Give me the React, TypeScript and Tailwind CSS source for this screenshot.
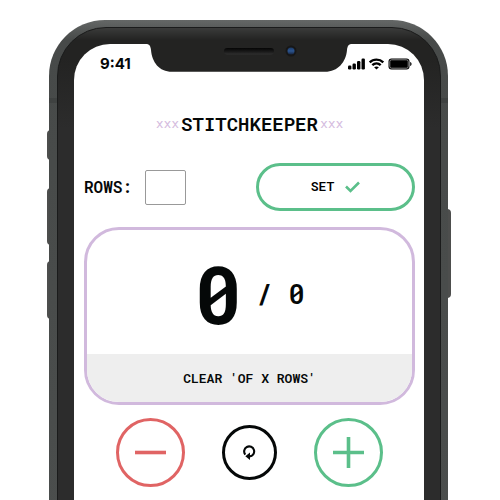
import React from "react";

const MONO = "font-['Roboto_Mono','DejaVu_Sans_Mono',monospace]";

function Notch() {
  return (
    <svg className="absolute left-1/2 -top-px -translate-x-1/2" width="206" height="29" viewBox="0 0 206 29" aria-hidden="true">
      <defs>
        <linearGradient id="speaker" x1="0" y1="0" x2="0" y2="1">
          <stop offset="0" stopColor="#050505" />
          <stop offset="0.6" stopColor="#1b1b1b" />
          <stop offset="1" stopColor="#303030" />
        </linearGradient>
        <linearGradient id="lens" x1="0" y1="0" x2="0" y2="1">
          <stop offset="0" stopColor="#1c3a66" />
          <stop offset="0.5" stopColor="#2c5590" />
          <stop offset="1" stopColor="#16243f" />
        </linearGradient>
      </defs>
      <path d="M0 0H206V1C202.500 1 201.500 3 201 7C200 19 192 28.800 179 28.800H26C13 28.800 6 19 5 7C4.500 3 3.500 1 0 1Z" fill="#232322" />
      <rect x="78" y="5" width="50" height="6.500" rx="3.200" fill="url(#speaker)" />
      <circle cx="145" cy="8" r="5.500" fill="#171717" />
      <circle cx="145" cy="8" r="3.500" fill="url(#lens)" />
    </svg>
  );
}

function StatusIcons() {
  return (
    <svg width="64" height="12" viewBox="0 0 64 12" aria-hidden="true">
      <rect x="0" y="7.500" width="3.400" height="4" rx="1.200" />
      <rect x="4.500" y="5.500" width="3.400" height="6" rx="1.200" />
      <rect x="9" y="3" width="3.400" height="8.500" rx="1.200" />
      <rect x="13.500" y="0.500" width="3.400" height="11" rx="1.200" />
      <g fill="none" stroke="#000" strokeWidth="2.400">
        <path d="M21.700 4.400C25.500 0.700 31.500 0.700 35.300 4.400" />
        <path d="M24.300 7.200C26.700 5 30.300 5 32.700 7.200" />
      </g>
      <path d="M26.100 9.200C27.500 8.100 29.500 8.100 30.900 9.200L28.500 11.600Z" />
      <rect x="40.500" y="0.500" width="21" height="11" rx="3" />
      <rect x="41.800" y="1.800" width="18.400" height="8.400" rx="1.800" fill="none" stroke="#bbb" strokeWidth="0.700" />
      <path d="M62.200 4C64 4.500 64 7.500 62.200 8Z" />
    </svg>
  );
}

export default function App() {
  return (
    <main className={`h-screen overflow-hidden bg-white pl-[49px] pr-[52px] pt-5 text-[#050808] ${MONO}`}>
      <div className="relative mx-auto max-w-[399px]">
        <i className="absolute -left-[2px] top-[110px] h-[30px] w-1 rounded-l-sm bg-[#4d4e4d]" />
        <i className="absolute -left-[2px] top-[168px] h-[57px] w-1 rounded-l-sm bg-[#4d4e4d]" />
        <i className="absolute -left-[2px] top-[241px] h-[58px] w-1 rounded-l-sm bg-[#4d4e4d]" />
        <i className="absolute -right-[3px] top-[189px] h-[89px] w-1 rounded-r-sm bg-[#4d4e4d]" />
        <div className="relative rounded-[56px] bg-[linear-gradient(#646766,#474a49_20px,#4d504f)] pt-[7px] pr-[7px] pb-2 pl-2">
          <i className="absolute inset-x-0 top-[78px] h-[5px] bg-[#3f4241]" />
          <div className="relative rounded-[49px] border border-[#1a1b1b] bg-[linear-gradient(#3a3b3a,#232322_12px,#232322_30px,#2c2c2c_100px)] px-4 pt-4 pb-5">
            <div className="relative min-h-[720px] rounded-[36px] bg-white pl-[10px] pr-[9px]">
              <Notch />
              <header className="flex h-10 items-center justify-between pl-4 pr-[3px] font-['Inter',sans-serif] text-[15px] font-bold">
                <time>9:41</time>
                <StatusIcons />
              </header>
              <h1 className="mt-6 flex h-8 items-center justify-center gap-[2px] text-[19px] font-semibold">
                <span className="text-[13px] font-normal text-[#d5bce0]">xxx</span>
                STITCHKEEPER
                <span className="text-[13px] font-normal text-[#d5bce0]">xxx</span>
              </h1>
              <form className="mt-[23px] flex items-center justify-between" onSubmit={(e) => e.preventDefault()}>
                <div className="flex items-center gap-[13px]">
                  <label htmlFor="rows" className="text-[16px] font-semibold">ROWS:</label>
                  <input id="rows" type="text" className="h-[35px] w-[41px] rounded-[2px] border border-[#999] bg-white text-center" />
                </div>
                <button type="submit" className="flex h-12 w-[159px] items-center justify-center gap-[11px] rounded-full border-3 border-[#5bbf8a] bg-white text-[13px] font-semibold text-black">
                  SET
                  <svg width="15" height="12" viewBox="0 0 15 12" fill="none" stroke="#5bbf8a" strokeWidth="2.600" aria-hidden="true">
                    <path d="M1 5.500L5.500 10L14 1.500" />
                  </svg>
                </button>
              </form>
              <section className="mt-4 overflow-hidden rounded-[35px] border-3 border-[#d1b9dd]">
                <p className="flex h-[124px] items-center justify-center gap-[14px] pt-[2px]">
                  <span className="text-[80px] font-bold leading-none">0</span>
                  <span className="text-[27px] font-semibold leading-none">/ 0</span>
                </p>
                <button type="button" className="block h-12 w-full bg-[#eee] pt-[2px] text-[13px] font-semibold">CLEAR 'OF X ROWS'</button>
              </section>
              <div className="mt-[13px] flex items-center justify-between px-8">
                <button type="button" aria-label="Remove a row" className="flex size-[69px] items-center justify-center rounded-full border-3 border-[#e06464]">
                  <svg width="31" height="31" viewBox="0 0 31 31" stroke="#e06464" strokeWidth="3.600" aria-hidden="true"><path d="M0 15.500H31" /></svg>
                </button>
                <button type="button" aria-label="Reset" className="flex size-[55px] items-center justify-center rounded-full border-3 border-[#050808]">
                  <svg width="13" height="15" viewBox="0 0 13 15" fill="none" aria-hidden="true">
                    <path d="M2.300 9.600A5 5 0 1 1 6.500 11.400" stroke="#050808" strokeWidth="2.100" />
                    <path d="M7 7.600V15L2.300 11.300Z" fill="#050808" />
                  </svg>
                </button>
                <button type="button" aria-label="Add a row" className="flex size-[69px] items-center justify-center rounded-full border-3 border-[#5bbf8a]">
                  <svg width="31" height="31" viewBox="0 0 31 31" stroke="#5bbf8a" strokeWidth="3.600" aria-hidden="true"><path d="M0 15.500H31M15.500 0V31" /></svg>
                </button>
              </div>
            </div>
          </div>
        </div>
      </div>
    </main>
  );
}
